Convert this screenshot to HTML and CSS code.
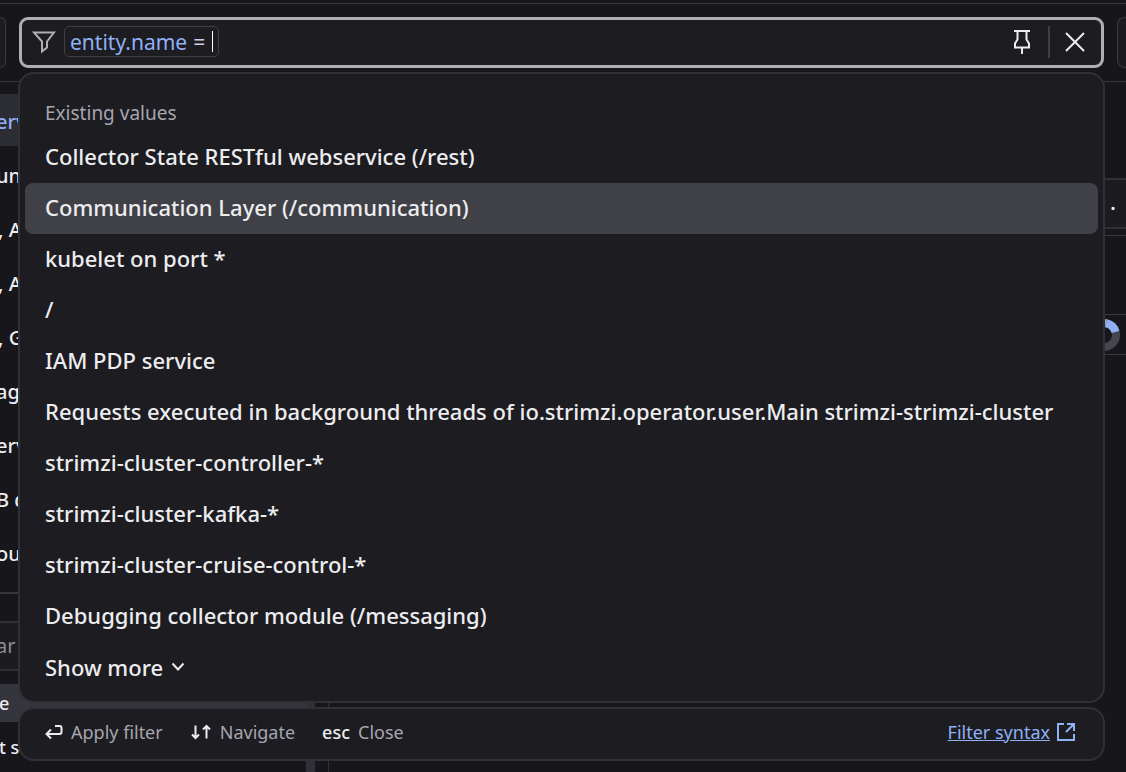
FILE: index.html
```html
<!DOCTYPE html>
<html lang="en">
<head>
  <meta charset="UTF-8"/>
  <meta name="viewport" content="width=device-width, initial-scale=1.0"/>
  <title>Services</title>
  <link rel="stylesheet" href="styles.css">
</head>
<body>
  <header class="toolbar">
    <button class="edge-btn edge-left" aria-label="Previous"></button>
    <div class="filter">
      <div class="filter-field">
        <svg class="icon-funnel" viewBox="0 0 24 24" width="24" height="24"><path d="M2 2.500H22L15 11.500V17.500L10 21.500V11.500Z"/></svg>
        <label class="chip">
          <span class="key">entity.name</span>
          <span class="op">=</span>
          <input class="chip-input" type="text" aria-label="Filter value">
        </label>
        <button class="icon-btn" aria-label="Pin filter">
          <svg viewBox="0 0 20 26" width="20" height="26"><path d="M2 2H18M5.500 2V10.500L3 14.500V18.500H17V14.500L14.500 10.500V2M10 18.500V25"/></svg>
        </button>
        <span class="divider"></span>
        <button class="icon-btn" aria-label="Clear filter">
          <svg viewBox="0 0 20 20" width="20" height="20"><path d="M1 1L19 19M19 1L1 19"/></svg>
        </button>
      </div>

      <div class="overlay">
        <div class="panel suggestions">
          <h2>Existing values</h2>
          <ul>
            <li><button>Collector State RESTful webservice (/rest)</button></li>
            <li><button class="active">Communication Layer (/communication)</button></li>
            <li><button>kubelet on port *</button></li>
            <li><button>/</button></li>
            <li><button>IAM PDP service</button></li>
            <li><button>Requests executed in background threads of io.strimzi.operator.user.Main strimzi-strimzi-cluster</button></li>
            <li><button>strimzi-cluster-controller-*</button></li>
            <li><button>strimzi-cluster-kafka-*</button></li>
            <li><button>strimzi-cluster-cruise-control-*</button></li>
            <li><button>Debugging collector module (/messaging)</button></li>
            <li><button class="more">Show more
              <svg viewBox="0 0 14 10" width="14" height="10"><path d="M1.500 1.500L7 7.500L12.500 1.500"/></svg></button></li>
          </ul>
        </div>
        <div class="panel hints">
          <span class="hint">
            <svg viewBox="0 0 18 16" width="18" height="16"><path d="M10 2H14.500Q16.500 2 16.500 4V8Q16.500 10 14.500 10H1.500M6 5.500L1.500 10L6 14.500"/></svg>
            Apply filter
          </span>
          <span class="hint">
            <svg viewBox="0 0 22 16" width="22" height="16"><path d="M5.500 1.500V14M2 10.500L5.500 14L9 10.500M16.500 14.500V2M13 5.500L16.500 2L20 5.500"/></svg>
            Navigate
          </span>
          <span class="hint"><kbd>esc</kbd> Close</span>
          <a class="syntax" href="#syntax"><span>Filter syntax</span>
            <svg viewBox="0 0 20 20" width="20" height="20"><path d="M8 2H2V18H18V12M11 2H18V9M18 2L10 10"/></svg></a>
        </div>
      </div>
    </div>
    <button class="edge-btn edge-right" aria-label="Next"></button>
  </header>

  <div class="page">
    <aside class="sidebar">
      <ul class="nav">
        <li class="current">erv</li>
        <li>unc</li>
        <li class="child">, A</li>
        <li class="child">, A</li>
        <li class="child">, G</li>
        <li>ag</li>
        <li>erv</li>
        <li>B d</li>
        <li>ou</li>
      </ul>
      <div class="search">ar</div>
      <div class="facet selected">e</div>
      <div class="facet">t s</div>
    </aside>
    <div class="scroll"></div>
    <main class="content">
      <div class="tile">.</div>
      <div class="row"></div>
      <div class="row chart-row">
        <svg viewBox="0 0 32 32" width="32" height="32">
          <circle class="ring" cx="16" cy="16" r="12"/>
          <path class="slice-grey" d="M16 4A12 12 0 0 1 18 4.200"/>
          <path class="slice" d="M18 4.200A12 12 0 0 1 27.500 13"/>
        </svg>
      </div>
    </main>
  </div>
</body>
</html>
```

FILE: styles.css
```css
* {
  box-sizing: border-box;
}

body {
  margin: 0;
  background: #16161b;
  color: #ededf0;
  font-family: "Noto Sans", sans-serif;
  font-size: 22px;
  font-weight: 500;
  min-height: 100vh;
  overflow: hidden;
  display: flex;
  flex-direction: column;
}

button {
  font: inherit;
  color: inherit;
  background: none;
  border: 0;
  padding: 0;
  cursor: pointer;
}

ul {
  list-style: none;
  margin: 0;
  padding: 0;
}

svg {
  flex: none;
  fill: none;
  stroke: currentColor;
  stroke-width: 2;
}

/* toolbar */
.toolbar {
  display: flex;
  gap: 13px;
  margin-top: 3px;
  padding: 13px 0;
  border-top: 1px solid #3a3a40;
  border-bottom: 1px solid #35353b;
}

.edge-btn {
  width: 6px;
  border: 1px solid #3a3a40;
  background: #1b1b20;
}

.edge-left {
  border-left: 0;
  border-radius: 0 8px 8px 0;
}

.edge-right {
  width: 9px;
  border-right: 0;
  border-radius: 8px 0 0 8px;
}

.filter {
  flex: 1;
  position: relative;
}

.filter-field {
  display: flex;
  align-items: center;
  height: 51px;
  padding: 0 16px 2px 10px;
  border: 3px solid #aeaeb4;
  border-radius: 9px;
  background: #1c1c21;
}

.icon-funnel {
  color: #aeaeb4;
}

.chip {
  display: flex;
  align-items: center;
  height: 31px;
  margin: 0 auto 0 8px;
  padding: 0 5px;
  border: 1px solid #3f3f46;
  border-radius: 5px;
  font-size: 21px;
  font-weight: 400;
}

.key {
  color: #8fb0f5;
}

.op {
  margin-left: 6px;
  color: #d4cbea;
}

.chip-input {
  width: 1px;
  height: 21px;
  margin-left: 7px;
  padding: 0;
  border: 0;
  border-radius: 0;
  background: #ffffff;
  outline: 0;
}

.icon-btn {
  display: flex;
}

.divider {
  width: 2px;
  height: 32px;
  margin: 0 15px 0 16px;
  background: #3f3f46;
}

/* suggestions overlay */
.overlay {
  position: absolute;
  top: 55px;
  left: -1px;
  right: -1px;
  display: flex;
  flex-direction: column;
  gap: 4px;
}

.panel {
  background: #1c1c21;
  border: 2px solid #303036;
  border-radius: 16px;
}

.suggestions {
  padding: 22px 5px 6px;
}

.suggestions h2 {
  margin: 0;
  padding: 0 20px 2px;
  font-size: 19px;
  line-height: 34px;
  font-weight: 400;
  color: #a6a6ae;
}

.suggestions button {
  display: block;
  width: 100%;
  height: 51px;
  padding: 0 20px 3px;
  border-radius: 8px;
  text-align: left;
}

.suggestions .active {
  background: #404047;
}

.suggestions .more {
  display: flex;
  align-items: center;
  gap: 8px;
  height: 53px;
}

.hints {
  display: flex;
  align-items: center;
  gap: 27px;
  height: 54px;
  padding: 0 27px 4px 25px;
  font-size: 18px;
  font-weight: 400;
  color: #a6a6ae;
}

.hint {
  display: flex;
  align-items: center;
  gap: 8px;
}

.hint svg,
.hint kbd {
  color: #ededf0;
}

kbd {
  font: inherit;
  font-weight: 500;
}

.syntax {
  display: flex;
  align-items: center;
  gap: 6px;
  margin-left: auto;
  color: #8fb0f5;
  text-decoration: none;
}

.syntax span {
  text-decoration: underline;
}

/* page behind the overlay */
.page {
  flex: 1;
  display: flex;
}

.sidebar {
  width: 306px;
  padding-top: 12px;
  font-size: 20px;
  text-indent: -4px;
}

.nav {
  padding-bottom: 12px;
  border-bottom: 2px solid #35353b;
}

.nav li {
  height: 52px;
  margin-bottom: 2px;
  line-height: 56px;
}

.nav .current {
  background: #2c2c35;
  color: #8fb0f5;
}

.nav .child {
  text-indent: -2px;
}

.search {
  height: 50px;
  margin: 27px 0 13px;
  border: 2px solid #303036;
  border-left: 0;
  background: #1b1b20;
  line-height: 46px;
  font-weight: 400;
  color: #8d8d95;
}

.facet {
  height: 38px;
  margin-bottom: 6px;
  line-height: 38px;
  font-size: 18px;
  text-indent: -1px;
}

.facet.selected {
  background: #35353d;
}

.scroll {
  width: 9px;
  margin-top: 620px;
  background: #303036;
}

.content {
  flex: 1;
  margin-left: 13px;
  padding-top: 96px;
  border-left: 1px solid #303036;
}

.tile {
  height: 51px;
  padding-right: 10px;
  border: 2px solid #303036;
  border-right: 0;
  background: #1b1b20;
  line-height: 42px;
  text-align: right;
}

.row {
  height: 79px;
  margin-top: 6px;
  border-top: 1px solid #3a3a40;
}

.chart-row {
  display: flex;
  justify-content: flex-end;
  align-items: center;
  height: 41px;
  margin-top: 0;
  padding-right: 6px;
  border-bottom: 1px solid #3a3a40;
}

.chart-row svg {
  stroke-width: 8;
}

.ring {
  stroke: #46464e;
}

.slice {
  stroke: #8fb0f5;
}

.slice-grey {
  stroke: #a6a6ae;
}
```
